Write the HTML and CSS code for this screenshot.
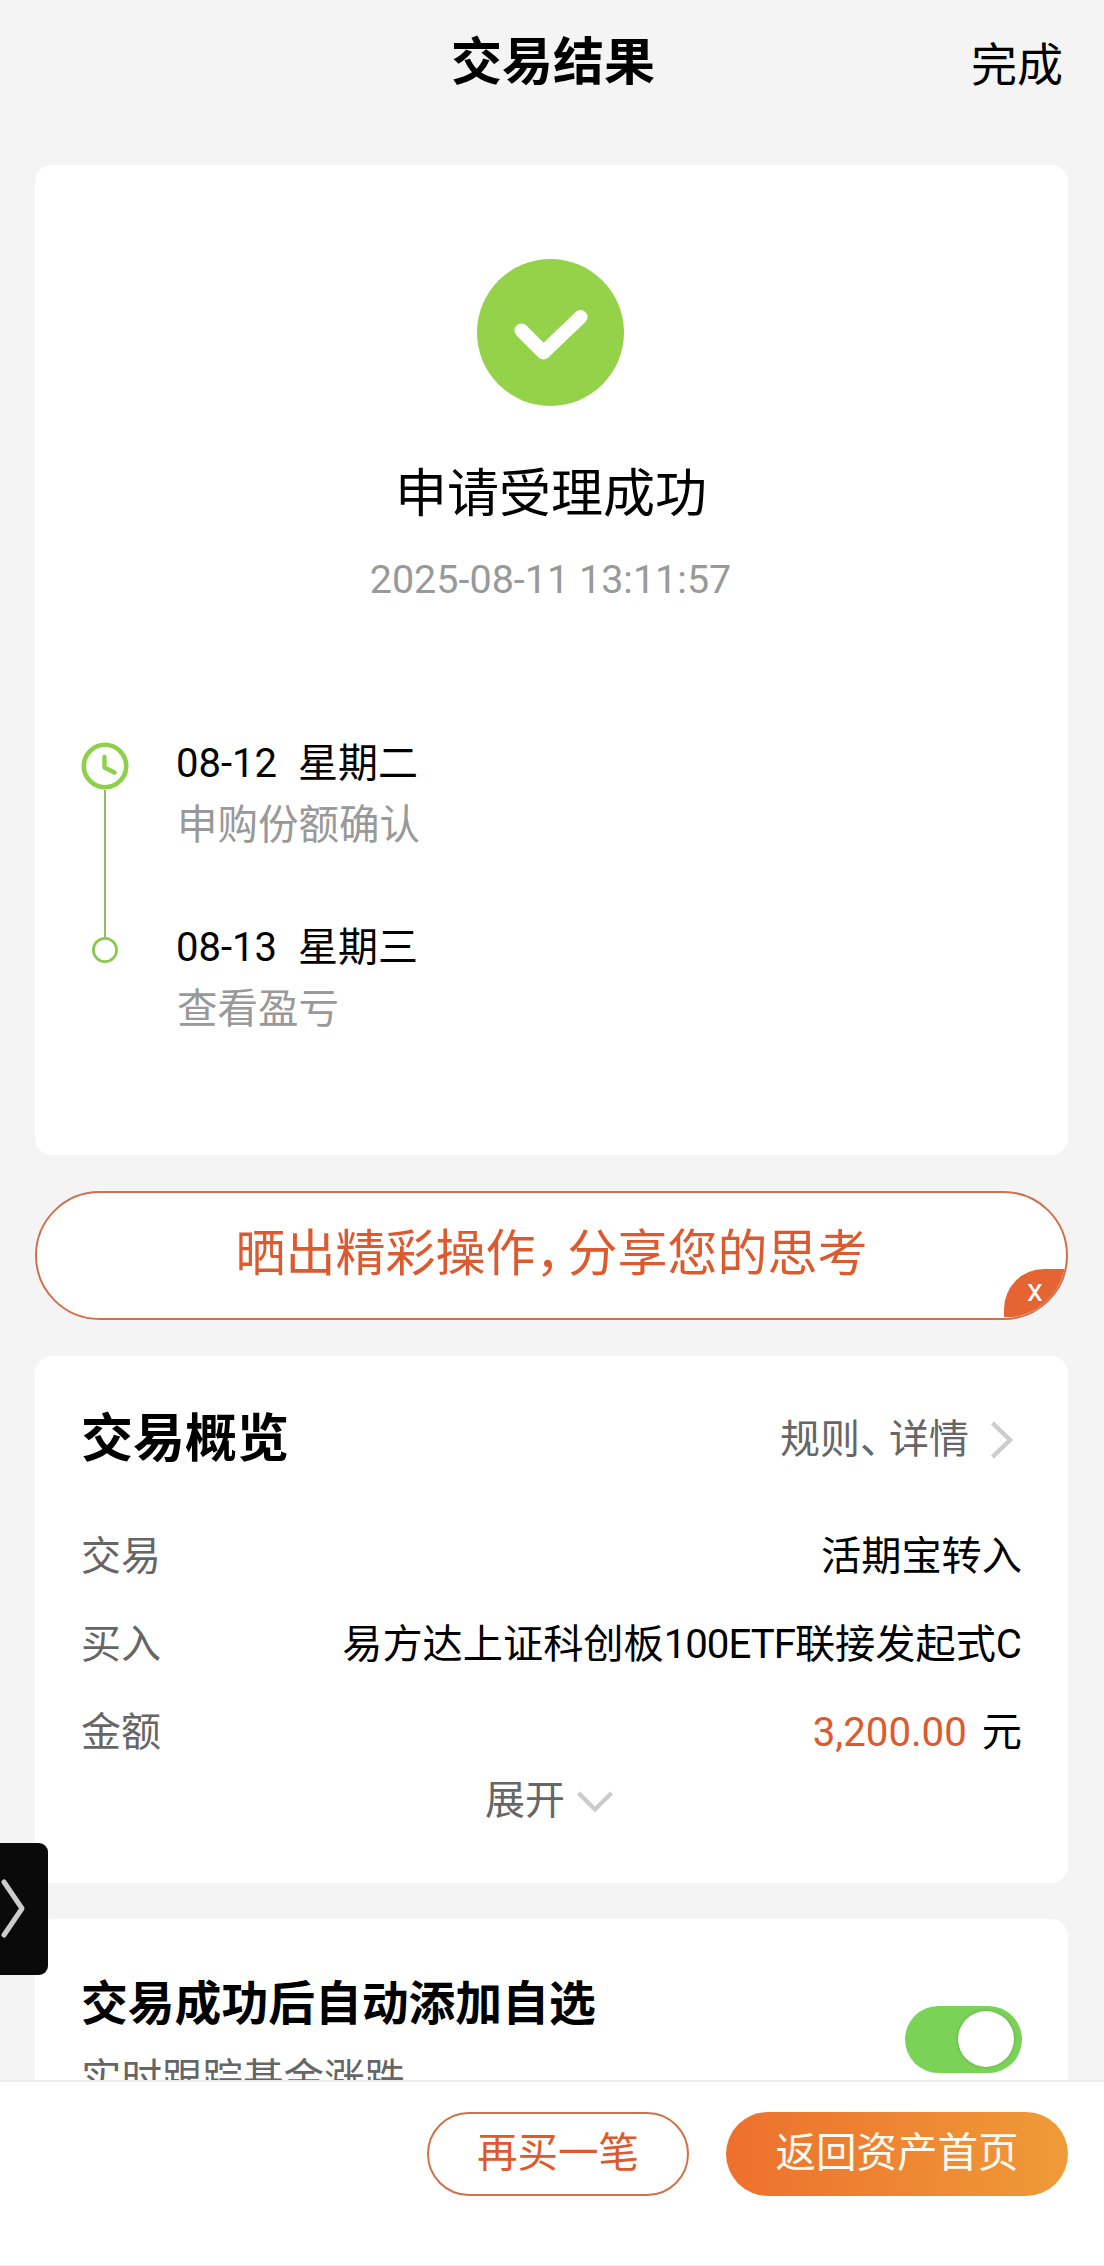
FILE: index.html
```html
<!doctype html>
<html lang="zh-CN">
<head>
  <meta charset="utf-8">

  <meta name="viewport" content="width=device-width, initial-scale=1">

  <title>交易结果</title>

  <link rel="stylesheet" href="styles.css">

</head>
<body>

  <div class="page">

    <header class="header">
      <h1 class="header-title">交易结果</h1>
      <a class="header-done">完成</a>
    </header>

    <main class="content">

      <section class="card result">
        <svg class="result-icon" viewBox="0 0 147 147">
          <circle cx="73.5" cy="73.5" r="73.5" fill="#94d24a"/>
          <path d="M44.5 71.5 L66.5 93.5 L103.5 58" fill="none" stroke="#fff" stroke-width="14" stroke-linecap="round" stroke-linejoin="round"/>
        </svg>
        <h2 class="result-title">申请受理成功</h2>
        <p class="result-time">2025-08-11 13:11:57</p>

        <div class="timeline">
          <div class="step">
            <div class="rail">
              <svg class="rail-clock" width="48" height="48" viewBox="0 0 48 48">
                <circle cx="24" cy="24" r="21.2" fill="none" stroke="#8fd04a" stroke-width="4.6"/>
                <path d="M23.5 15 V25.5 L33.5 30.5" fill="none" stroke="#8fd04a" stroke-width="4.4" stroke-linecap="round" stroke-linejoin="round"/>
              </svg>
              <div class="rail-line"></div>
            </div>
            <div class="step-text">
              <p class="step-date">08-12<span class="weekday">星期二</span></p>
              <p class="step-note">申购份额确认</p>
            </div>
          </div>
          <div class="step">
            <div class="rail">
              <div class="rail-line rail-stub"></div>
              <svg width="48" height="26" viewBox="0 0 48 26">
                <circle cx="24" cy="13" r="11.6" fill="none" stroke="#8cc653" stroke-width="2.7"/>
              </svg>
            </div>
            <div class="step-text">
              <p class="step-date">08-13<span class="weekday">星期三</span></p>
              <p class="step-note">查看盈亏</p>
            </div>
          </div>
        </div>
      </section>

      <div class="share">
        晒出精彩操作<span class="share-comma">，</span>分享您的思考
        <span class="share-close">x</span>
      </div>

      <section class="card overview">
        <div class="overview-head">
          <h2 class="overview-title">交易概览</h2>
          <a class="overview-link">规则<span class="dun">、</span>详情
            <svg width="26" height="40" viewBox="0 0 26 40">
              <path d="M3.5 3 L21 20 L3.5 37" fill="none" stroke="#ccc" stroke-width="4.4"/>
            </svg>
          </a>
        </div>
        <div class="row">
          <span class="label">交易</span>
          <span class="value">活期宝转入</span>
        </div>
        <div class="row">
          <span class="label">买入</span>
          <span class="value">易方达上证科创板<span class="latin">100ETF</span>联接发起式C</span>
        </div>
        <div class="row">
          <span class="label">金额</span>
          <span class="value"><span class="amount">3,200.00</span>元</span>
        </div>
        <div class="expand">展开
          <svg width="38" height="24" viewBox="0 0 38 24">
            <path d="M2.5 4 L19 20.5 L35.5 4" fill="none" stroke="#ccc" stroke-width="4.4"/>
          </svg>
        </div>
      </section>

      <section class="card watch">
        <div>
          <h2 class="watch-title">交易成功后自动添加自选</h2>
          <p class="watch-note">实时跟踪基金涨跌</p>
        </div>
        <div class="switch"><div class="knob"></div></div>
      </section>

    </main>

    <div class="drawer">
      <svg width="48" height="132" viewBox="0 0 48 132">
        <path d="M4 39 L22 65.5 L4 92" fill="none" stroke="#ccc" stroke-width="5" stroke-linecap="round" stroke-linejoin="round"/>
      </svg>
    </div>

    <footer class="footer">
      <a class="btn btn-outline">再买一笔</a>
      <a class="btn btn-fill">返回资产首页</a>
    </footer>

  </div>

</body>
</html>
```
FILE: styles.css
```css
* {
  box-sizing: border-box;
}

body {
  margin: 0;
  background: #f4f4f4;
  color: #000;
  font-family: Roboto, "Noto Sans CJK SC", sans-serif;
  font-size: 40px;
}

h1, h2, p {
  margin: 0;
}

svg {
  display: block;
}

.page {
  position: relative;
  display: flex;
  flex-direction: column;
  height: 2266px;
  overflow: hidden;
}

/* header */

.header {
  display: grid;
  grid-template-columns: 1fr auto 1fr;
  flex: none;
  height: 165px;
  padding: 0 41px 0 43px;
}

.header-title {
  grid-column: 2;
  font-size: 51px;
  line-height: 126px;
}

.header-done {
  justify-self: end;
  font-size: 46px;
  line-height: 130px;
}

/* cards */

.content {
  display: flex;
  flex: 1;
  flex-direction: column;
  gap: 36px;
  min-height: 0;
  padding: 0 36px 0 35px;
  overflow: hidden;
}

.card {
  flex: none;
  padding: 0 46px;
  background: #fff;
  border-radius: 17px;
}

.result {
  height: 990px;
  padding: 94px 48px 0 46px;
}

.result-icon {
  width: 147px;
  height: 147px;
  margin: 0 auto;
}

.result-title {
  margin-top: 59px;
  padding-left: 1px;
  font-size: 52px;
  font-weight: 400;
  line-height: 60px;
  text-align: center;
}

.result-time {
  margin-top: 30px;
  color: #999;
  font-size: 39.5px;
  line-height: 50px;
  text-align: center;
}

.timeline {
  margin-top: 134px;
}

.step {
  display: flex;
  gap: 47px;
  height: 184px;
}

.rail {
  display: flex;
  flex-direction: column;
  align-items: center;
  width: 48px;
}

.rail-clock {
  margin-top: 3px;
}

.rail-line {
  flex: 1;
  width: 2px;
  background: #90be66;
}

.rail-stub {
  flex: none;
  height: 14px;
}

.step-date {
  line-height: 50px;
}

.weekday {
  margin-left: 21px;
}

.step-note {
  margin-top: 11px;
  padding-left: 1px;
  color: #999;
  font-size: 40.5px;
  line-height: 50px;
}

/* share banner */

.share {
  position: relative;
  flex: none;
  height: 129px;
  border: 2px solid #d0714a;
  border-radius: 65px;
  background: #fff;
  color: #dd5a2e;
  font-size: 50px;
  line-height: 122px;
  text-align: center;
  overflow: hidden;
}

/* half-width punctuation */
.share-comma,
.dun {
  font-feature-settings: "halt";
}

.share-comma {
  margin-right: 7px;
}

.share-close {
  position: absolute;
  right: 0;
  bottom: 1px;
  width: 62px;
  height: 48px;
  background: #e66431;
  border-radius: 40px 0 0 0;
  color: #fff;
  font-size: 32px;
  line-height: 43px;
}

/* overview */

.overview {
  height: 527px;
  padding-top: 54px;
}

.overview-head {
  display: flex;
  justify-content: space-between;
  margin-bottom: 43px;
  line-height: 60px;
}

.overview-title {
  font-size: 52px;
}

.overview-link {
  display: flex;
  align-items: center;
  margin-right: 7px;
  color: #666;
}

.overview-link svg {
  margin-left: 20px;
}

.dun {
  margin-right: 9px;
}

.row {
  display: flex;
  justify-content: space-between;
  line-height: 88px;
}

.label {
  color: #666;
}

.value {
  font-size: 40.2px;
}

.latin {
  letter-spacing: -1px;
}

.amount {
  margin-right: 15px;
  color: #dd5a2e;
}

.expand {
  display: flex;
  justify-content: center;
  align-items: center;
  gap: 11px;
  padding-right: 4px;
  color: #666;
  line-height: 48px;
}

/* add to watchlist */

.watch {
  display: flex;
  justify-content: space-between;
  height: 220px;
  padding-top: 55px;
}

.watch-title {
  font-size: 46.8px;
  line-height: 60px;
}

.watch-note {
  margin-top: 20px;
  color: #666;
  font-size: 40.5px;
  line-height: 50px;
}

.switch {
  width: 117px;
  height: 67px;
  margin-top: 32px;
  padding: 5px 8px;
  background: #7ad257;
  border-radius: 34px;
}

.knob {
  width: 56px;
  height: 56px;
  margin-left: auto;
  background: #fff;
  border-radius: 50%;
  box-shadow: 0 0 3px rgba(0, 0, 0, .25);
}

/* side drawer handle */

.drawer {
  position: absolute;
  left: 0;
  top: 1843px;
  width: 48px;
  height: 132px;
  background: #0a0a0a;
  border-radius: 0 9px 9px 0;
}

/* bottom bar */

.footer {
  display: flex;
  flex: none;
  justify-content: flex-end;
  gap: 37px;
  height: 186px;
  padding: 30px 36px 0 0;
  background: #fff;
  border-top: 2px solid #ededed;
  border-bottom: 1px solid #eee;
}

.btn {
  height: 84px;
  border-radius: 42px;
  line-height: 83px;
  text-align: center;
}

.btn-outline {
  width: 262px;
  border: 2px solid #d0714a;
  color: #dd5a2e;
  font-size: 40.5px;
  line-height: 78px;
}

.btn-fill {
  width: 342px;
  background: linear-gradient(to right, #ed702d, #ef9b38);
  color: #fffaf0;
  font-size: 40.5px;
}
```
